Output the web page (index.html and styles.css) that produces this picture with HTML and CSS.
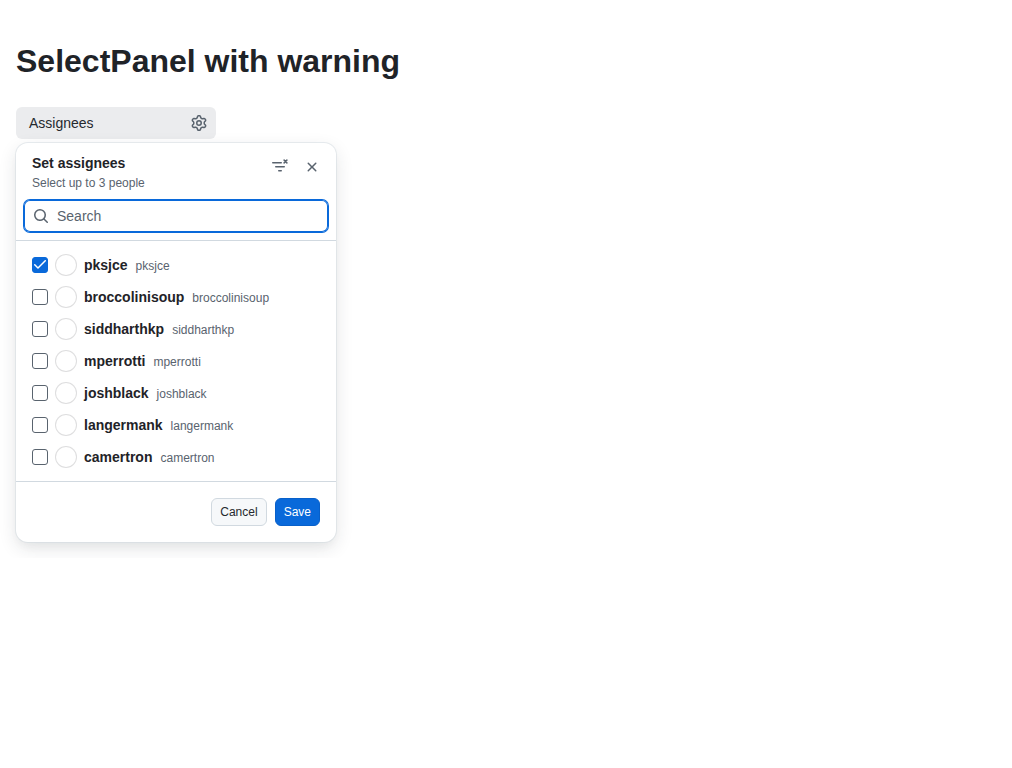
FILE: index.html
```
<!DOCTYPE html>
<html lang="en">
<head>
<meta charset="utf-8">
<title>SelectPanel with warning</title>
<link rel="stylesheet" href="styles.css">
</head>
<body>
<h1 class="title">SelectPanel with warning</h1>
<button class="trigger" type="button">
  <span>Assignees</span>
  <svg width="16" height="16" viewBox="0 0 16 16" fill="currentColor"><path d="M8 0a8.2 8.2 0 0 1 .701.031C9.444.095 9.99.645 10.16 1.29l.288 1.107c.018.066.079.158.212.224.231.114.454.243.668.386.123.082.233.09.299.071l1.103-.303c.644-.176 1.392.021 1.82.63.27.385.506.792.704 1.218.315.675.111 1.422-.364 1.891l-.814.806c-.049.048-.098.147-.088.294.016.257.016.515 0 .772-.01.147.038.246.088.294l.814.806c.475.469.679 1.216.364 1.891a7.977 7.977 0 0 1-.704 1.217c-.428.61-1.176.807-1.82.63l-1.102-.302c-.067-.019-.177-.011-.3.071a5.909 5.909 0 0 1-.668.386c-.133.066-.194.158-.211.224l-.29 1.106c-.168.646-.715 1.196-1.458 1.26a8.006 8.006 0 0 1-1.402 0c-.743-.064-1.289-.614-1.458-1.26l-.289-1.106c-.018-.066-.079-.158-.212-.224a5.738 5.738 0 0 1-.668-.386c-.123-.082-.233-.09-.299-.071l-1.103.303c-.644.176-1.392-.021-1.82-.63a8.12 8.12 0 0 1-.704-1.218c-.315-.675-.111-1.422.363-1.891l.815-.806c.05-.048.098-.147.088-.294a6.214 6.214 0 0 1 0-.772c.01-.147-.038-.246-.088-.294l-.815-.806C.635 6.045.431 5.298.746 4.623a7.92 7.92 0 0 1 .704-1.217c.428-.61 1.176-.807 1.82-.63l1.102.302c.067.019.177.011.3-.071.214-.143.437-.272.668-.386.133-.066.194-.158.211-.224l.29-1.106C6.009.645 6.556.095 7.299.03 7.53.01 7.764 0 8 0Zm-.571 1.525c-.036.003-.108.036-.137.146l-.289 1.105c-.147.561-.549.967-.998 1.189-.173.086-.34.183-.5.29-.417.278-.97.423-1.529.27l-1.103-.303c-.109-.03-.175.016-.195.045-.22.312-.412.644-.573.99-.014.031-.021.11.059.19l.815.806c.411.406.562.957.53 1.456a4.709 4.709 0 0 0 0 .582c.032.499-.119 1.05-.53 1.456l-.815.806c-.081.08-.073.159-.059.19.162.346.353.677.573.989.02.03.085.076.195.046l1.102-.303c.56-.153 1.113-.008 1.53.27.161.107.328.204.501.29.447.222.85.629.997 1.189l.289 1.105c.029.109.101.143.137.146a6.6 6.6 0 0 0 1.142 0c.036-.003.108-.036.137-.146l.289-1.105c.147-.561.549-.967.998-1.189.173-.086.34-.183.5-.29.417-.278.97-.423 1.529-.27l1.103.303c.109.029.175-.016.195-.045.22-.313.411-.644.573-.99.014-.031.021-.11-.059-.19l-.815-.806c-.411-.406-.562-.957-.53-1.456a4.709 4.709 0 0 0 0-.582c-.032-.499.119-1.05.53-1.456l.815-.806c.081-.08.073-.159.059-.19a6.464 6.464 0 0 0-.573-.989c-.02-.03-.085-.076-.195-.046l-1.102.303c-.56.153-1.113.008-1.53-.27a4.44 4.44 0 0 0-.501-.29c-.447-.222-.85-.629-.997-1.189l-.289-1.105c-.029-.11-.101-.143-.137-.146a6.6 6.6 0 0 0-1.142 0ZM11 8a3 3 0 1 1-6 0 3 3 0 0 1 6 0ZM9.5 8a1.5 1.5 0 1 0-3.001.001A1.5 1.5 0 0 0 9.5 8Z"/></svg>
</button>
<section class="panel">
  <header class="head">
    <div class="head-row">
      <div>
        <h2 class="head-title">Set assignees</h2>
        <div class="head-sub">Select up to 3 people</div>
      </div>
      <div class="head-actions">
        <svg width="16" height="16" viewBox="0 0 16 16" fill="none" stroke="currentColor" stroke-width="1.5" stroke-linecap="round"><path d="M.75 3.75h8.5M3.75 7.75h8.5M6.75 11.75h2.5M12.1 1.1l2.8 2.8M14.9 1.1l-2.8 2.8"/></svg>
        <svg width="16" height="16" viewBox="0 0 16 16" fill="currentColor"><path d="M3.72 3.72a.75.75 0 0 1 1.06 0L8 6.94l3.22-3.22a.749.749 0 0 1 1.275.326.749.749 0 0 1-.215.734L9.06 8l3.22 3.22a.749.749 0 0 1-.326 1.275.749.749 0 0 1-.734-.215L8 9.06l-3.22 3.22a.751.751 0 0 1-1.042-.018.751.751 0 0 1-.018-1.042L6.94 8 3.72 4.78a.75.75 0 0 1 0-1.06Z"/></svg>
      </div>
    </div>
    <label class="search">
      <svg width="16" height="16" viewBox="0 0 16 16" fill="currentColor"><path d="M10.68 11.74a6 6 0 0 1-7.922-8.982 6 6 0 0 1 8.982 7.922l3.04 3.04a.749.749 0 0 1-.326 1.275.749.749 0 0 1-.734-.215ZM11.5 7a4.499 4.499 0 1 0-8.997 0A4.499 4.499 0 0 0 11.5 7Z"/></svg>
      <input class="search-input" type="text" placeholder="Search">
    </label>
  </header>
  <ul class="list">
    <li class="item"><span class="box checked"><svg width="12" height="9" viewBox="0 0 12 9" fill="#fff"><path fill-rule="evenodd" d="M11.78.22a.75.75 0 0 1 0 1.061L4.52 8.541a.75.75 0 0 1-1.062 0L.202 5.285a.75.75 0 0 1 1.061-1.061l2.725 2.723L10.718.22a.75.75 0 0 1 1.062 0Z"/></svg></span><span class="avatar"></span><b class="name">pksjce</b><span class="login">pksjce</span></li>
    <li class="item"><span class="box"></span><span class="avatar"></span><b class="name">broccolinisoup</b><span class="login">broccolinisoup</span></li>
    <li class="item"><span class="box"></span><span class="avatar"></span><b class="name">siddharthkp</b><span class="login">siddharthkp</span></li>
    <li class="item"><span class="box"></span><span class="avatar"></span><b class="name">mperrotti</b><span class="login">mperrotti</span></li>
    <li class="item"><span class="box"></span><span class="avatar"></span><b class="name">joshblack</b><span class="login">joshblack</span></li>
    <li class="item"><span class="box"></span><span class="avatar"></span><b class="name">langermank</b><span class="login">langermank</span></li>
    <li class="item"><span class="box"></span><span class="avatar"></span><b class="name">camertron</b><span class="login">camertron</span></li>
  </ul>
  <footer class="foot">
    <button class="btn" type="button">Cancel</button>
    <button class="btn primary" type="button">Save</button>
  </footer>
</section>
</body>
</html>
```
FILE: styles.css
```
* { box-sizing: border-box; }
body { margin: 0; padding: 37px 16px 16px; background: #fff; color: #1f2328; font: 14px/20px "Liberation Sans", Arial, sans-serif; }
svg { display: block; flex: none; }
.title { margin: 0 0 22px; font-size: 32px; line-height: 48px; font-weight: 700; }
.trigger { display: flex; align-items: center; justify-content: space-between; width: 200px; height: 32px; padding: 0 9px 0 13px; border: 0; border-radius: 6px; background: #ebecee; color: #25292e; font: inherit; }
.trigger svg { color: #59636e; }
.panel { width: 320px; height: 399px; margin-top: 4px; display: flex; flex-direction: column; border-radius: 12px; background: #fff; box-shadow: 0 0 0 1px #d1d9e080, 0 6px 12px -3px #25292e0a, 0 6px 18px 0 #25292e1f; }
.head { height: 98px; padding: 8px 8px 0; border-bottom: 1px solid #d1d9e0; }
.head-row { display: flex; justify-content: space-between; height: 49px; padding: 2px 8px 0; }
.head-title { margin: 0; font-size: 14px; line-height: 21px; font-weight: 700; }
.head-sub { font-size: 12px; line-height: 18px; color: #59636e; }
.head-actions { display: flex; gap: 16px; padding-top: 6px; color: #59636e; }
.search { display: flex; align-items: center; gap: 8px; height: 32px; padding: 0 9px; border-radius: 6px; color: #59636e; box-shadow: 0 0 0 1px #0969da, inset 0 0 0 1px #0969da; }
.search-input { flex: 1; min-width: 0; padding: 0; border: 0; outline: 0; background: none; font: inherit; color: #1f2328; }
.search-input::placeholder { color: #59636e; opacity: 1; }
.list { flex: 1; margin: 0; padding: 8px; list-style: none; }
.item { display: flex; align-items: center; height: 32px; padding: 0 8px; }
.box { display: grid; place-items: center; width: 16px; height: 16px; border: 1px solid #59636e; border-radius: 3px; background: #fff; }
.box.checked { padding-bottom: 1px; background: #0969da; border-color: #0969da; }
.avatar { width: 20px; height: 20px; margin: 0 8px; border-radius: 50%; box-shadow: 0 0 0 1px #1f232826; }
.login { margin: 2px 0 0 8px; font-size: 12px; line-height: 18px; color: #59636e; }
.foot { display: flex; justify-content: flex-end; gap: 8px; height: 61px; padding: 16px; border-top: 1px solid #d1d9e0; }
.btn { height: 28px; padding: 0 8px; border: 1px solid #d1d9e0; border-radius: 6px; background: #f6f8fa; color: #25292e; font: 12px/18px "Liberation Sans", Arial, sans-serif; }
.btn.primary { border-color: #0860ca; background: #0969da; color: #fff; }
```
